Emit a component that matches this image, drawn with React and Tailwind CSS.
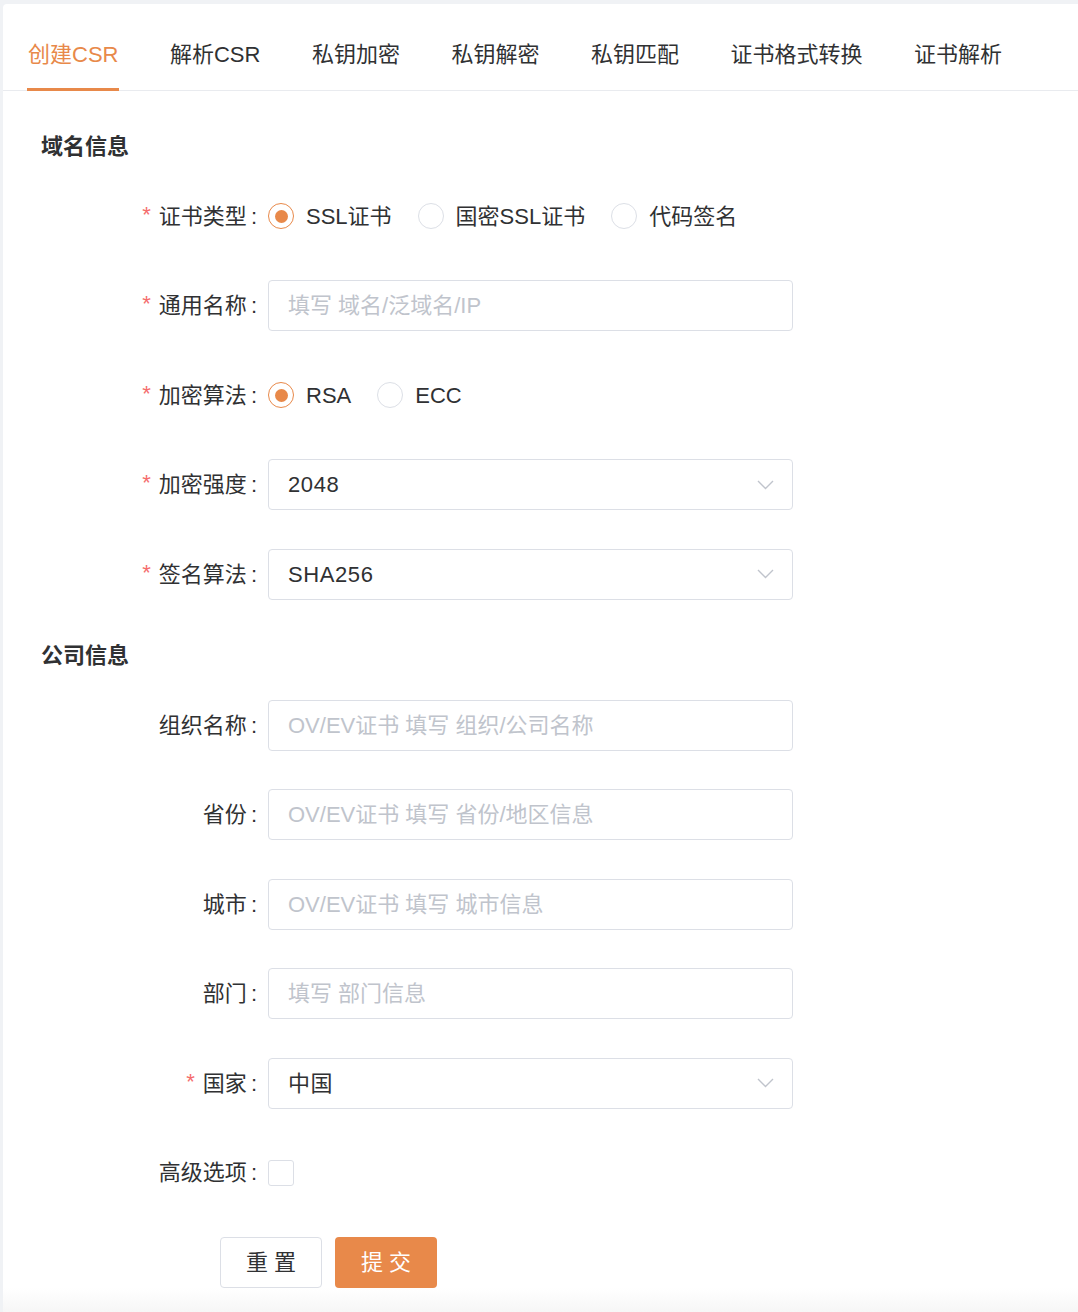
import React from "react";

const FONT = { fontFamily: '"Liberation Sans","Noto Sans CJK SC",sans-serif' };

function Label({ text, required }) {
  return (
    <div className="w-[255px] shrink-0 flex items-center justify-end text-[22px] text-[#303133]">
      {required && <span className="text-[#f56c6c] mr-[8px] text-[22px] relative top-[-2px]">*</span>}
      <span>{text}</span>
      <span className="ml-[4px] mr-[1px]">:</span>
    </div>
  );
}

function Row({ label, required, children }) {
  return (
    <div className="flex h-[51px] mb-[38.5px] items-center">
      <Label text={label} required={required} />
      <div className="ml-[10px] flex items-center">{children}</div>
    </div>
  );
}

function TextInput({ placeholder }) {
  return (
    <div className="w-[525px] h-[51px] border border-[#dcdfe6] rounded-[4px] flex items-center pl-[19px] text-[22px] text-[#c0c4cc]">
      {placeholder}
    </div>
  );
}

function Select({ value }) {
  return (
    <div className="w-[525px] h-[51px] border border-[#dcdfe6] rounded-[4px] flex items-center justify-between pl-[19px] pr-[18px] text-[22px] text-[#303133]">
      <span className="tracking-[0.6px]">{value}</span>
      <svg width="17" height="10" viewBox="0 0 17 10" fill="none">
        <path d="M1 1 L8.5 8.5 L16 1" stroke="#c0c4cc" strokeWidth="1.4" />
      </svg>
    </div>
  );
}

function Radio({ label, checked }) {
  return (
    <div className="flex items-center mr-[26px]">
      <div
        className={
          "w-[26px] h-[26px] rounded-full border flex items-center justify-center " +
          (checked ? "border-[#e8894a]" : "border-[#dcdfe6]")
        }
      >
        {checked && <div className="w-[13px] h-[13px] rounded-full bg-[#e8894a]" />}
      </div>
      <span className="ml-[12px] text-[22px] text-[#303133]">{label}</span>
    </div>
  );
}

function SectionTitle({ children, className }) {
  return (
    <div className={"pl-[38px] h-[30px] leading-[30px] text-[22px] font-bold text-[#303133] mb-[28.5px] " + className}>
      {children}
    </div>
  );
}

const tabs = ["创建CSR", "解析CSR", "私钥加密", "私钥解密", "私钥匹配", "证书格式转换", "证书解析"];

export default function App() {
  return (
    <div className="min-h-[1312px] bg-[#f0f2f5] pl-[3px] pt-[4px]" style={FONT}>
      <div className="bg-white rounded-tl-[4px]">
        <div className="flex pl-[25px] gap-[51.5px] border-b border-[#e9ebef] h-[87px]">
          {tabs.map((t, i) => (
            <div
              key={t}
              className={
                "h-full flex items-center pt-[14px] text-[22px] relative " +
                (i === 0 ? "text-[#e8894a]" : "text-[#303133]")
              }
            >
              <span>{t}</span>
              {i === 0 && <div className="absolute left-[-1px] right-[-1px] bottom-[-1px] h-[3px] bg-[#e8894a]" />}
            </div>
          ))}
        </div>

        <div className="pt-[41px]">
          <SectionTitle>域名信息</SectionTitle>
          <Row label="证书类型" required>
            <Radio label="SSL证书" checked />
            <Radio label="国密SSL证书" />
            <Radio label="代码签名" />
          </Row>
          <Row label="通用名称" required>
            <TextInput placeholder="填写 域名/泛域名/IP" />
          </Row>
          <Row label="加密算法" required>
            <Radio label="RSA" checked />
            <Radio label="ECC" />
          </Row>
          <Row label="加密强度" required>
            <Select value="2048" />
          </Row>
          <Row label="签名算法" required>
            <Select value="SHA256" />
          </Row>

          <SectionTitle className="mt-[41.5px]">公司信息</SectionTitle>
          <Row label="组织名称">
            <TextInput placeholder="OV/EV证书 填写 组织/公司名称" />
          </Row>
          <Row label="省份">
            <TextInput placeholder="OV/EV证书 填写 省份/地区信息" />
          </Row>
          <Row label="城市">
            <TextInput placeholder="OV/EV证书 填写 城市信息" />
          </Row>
          <Row label="部门">
            <TextInput placeholder="填写 部门信息" />
          </Row>
          <Row label="国家" required>
            <Select value="中国" />
          </Row>
          <Row label="高级选项">
            <div className="w-[26px] h-[26px] border border-[#dcdfe6] rounded-[3px]" />
          </Row>

          <div className="flex pl-[217px] gap-[13px] h-[51px]">
            <button className="w-[102px] h-[51px] border border-[#dcdfe6] rounded-[4px] bg-white text-[22px] text-[#303133] tracking-[6px] pl-[6px]">
              重置
            </button>
            <button className="w-[102px] h-[51px] rounded-[4px] bg-[#e8894a] text-[22px] text-white tracking-[6px] pl-[6px]">
              提交
            </button>
          </div>
          <div className="h-[25px] bg-gradient-to-b from-white to-[#f6f6f6]" />
        </div>
      </div>
    </div>
  );
}
